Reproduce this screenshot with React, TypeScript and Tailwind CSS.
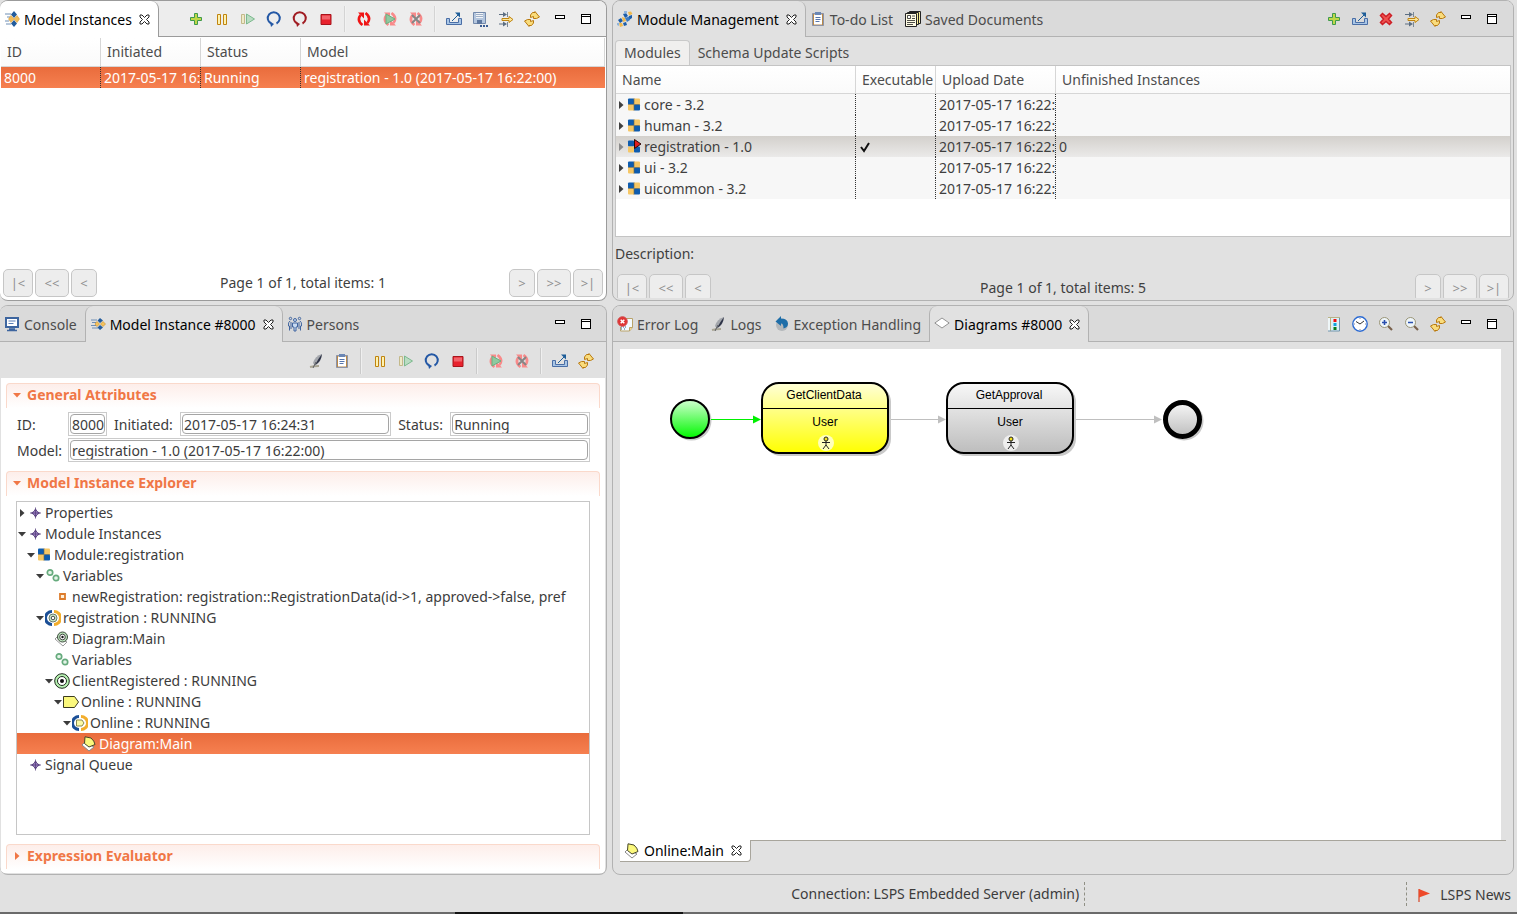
import React from 'react';
import clsx from 'clsx';

/* ---------- icons ---------- */

type IconName =
  | 'instance' | 'instanceTab' | 'add' | 'pause' | 'resume' | 'restart' | 'restartRed' | 'stop' | 'refreshRed'
  | 'resumeAll' | 'stopAll' | 'export' | 'save' | 'filter' | 'sync' | 'minimize' | 'maximize'
  | 'modules' | 'todo' | 'documents' | 'delete' | 'module' | 'moduleRun' | 'console' | 'persons'
  | 'feather' | 'errorLog' | 'exception' | 'diamond' | 'legend' | 'clock' | 'zoomIn' | 'zoomOut'
  | 'star' | 'vars' | 'field' | 'process' | 'processDiagram' | 'target' | 'task' | 'taskProcess'
  | 'taskDiagram' | 'flag';

const gold = '#c08410';
const circlingArrows = (color: string) => (
  <g>
    <path d="M6.500 14Q.5 9.500 4.500 4M9.500 2Q15.500 6.500 11.500 12" fill="none" stroke={color} strokeWidth="2.600" />
    <path d="M2 1.500h6v6zM14 14.500H8v-6z" fill={color} />
  </g>
);

const drawings: Record<IconName, React.ReactNode> = {
  instance: (
    <g>
      <path d="M1 3h6M3 6h3M1 10h4M2 13h5" stroke="#6f8fb5" />
      <path d="M10 0l3 3.500-3 3.500-3-3.500zM10 9l3 3.500-3 3.500-3-3.500z" fill="#235c9c" />
      <path d="M7 4.500l3 3.500-3 3.500L4.500 8zM13 4.500L15.500 8 13 11.500 10 8z" fill="#f2bd58" stroke="#cf9430" strokeWidth=".5" />
    </g>
  ),
  instanceTab: (
    <g>
      <path d="M1 4h6M2 6.500h4M1 9.500h5M2 12h6" stroke="#6f8fb5" />
      <path d="M10 2l3 2.500-3 2.500-2.500-2.500zM10 9l3 2.500-3 2.500-2.500-2.500z" fill="#235c9c" />
      <path d="M7 5.500L9.500 8 7 10.500 5 8zM13 5.500L15.500 8 13 10.500 10.500 8z" fill="#f4c35f" stroke="#c78a20" strokeWidth=".6" />
    </g>
  ),
  add: <path d="M6.500 2.500h3v4h4v3h-4v4h-3v-4h-4v-3h4z" fill="#bfd748" stroke="#3f9a4c" />,
  pause: <path d="M3.500 3.500h3v10h-3zM9.500 3.500h3v10h-3z" fill="#fdf2b0" stroke={gold} />,
  resume: (
    <g>
      <path d="M1.500 3.500h3v9h-3z" fill="#eeeac8" stroke="#c3b98a" />
      <path d="M6.500 3v10l8-5z" fill="#b9dcc2" stroke="#7cb98d" />
    </g>
  ),
  restart: (
    <g fill="none" stroke="#2458a5" strokeWidth="2">
      <path d="M5 12.500A6 6 0 1 1 10.500 12.500" />
      <path d="M4 10.500l4 2.500-3 3z" fill="#2458a5" stroke="none" />
    </g>
  ),
  restartRed: (
    <g fill="none" stroke="#a01c22" strokeWidth="2">
      <path d="M5 12.500A6 6 0 1 1 10.500 12.500" />
      <path d="M4 10.500l4 2.500-3 3z" fill="#a01c22" stroke="none" />
    </g>
  ),
  stop: (
    <g>
      <path d="M3 3.500h10v10H3z" fill="#e8222d" stroke="#a8141c" />
      <path d="M4 4.500h8v4H4z" fill="#f2626a" />
    </g>
  ),
  refreshRed: circlingArrows('#f01414'),
  resumeAll: (
    <g>
      {circlingArrows('#f98a8a')}
      <path d="M4 3v10l9-5z" fill="#8fc9a0" stroke="#6aaf80" />
    </g>
  ),
  stopAll: (
    <g>
      {circlingArrows('#f98a8a')}
      <path d="M4 4l8 8M12 4l-8 8" stroke="#858585" strokeWidth="2" />
    </g>
  ),
  export: (
    <g>
      <path d="M.5 7.500h3v4h9v-4h3v6H.5z" fill="#a9c6e6" stroke="#4a6ea6" />
      <path d="M6 10l7-7" stroke="#1d5d98" />
      <path d="M14 1.500v5l-5-5z" fill="#1d5d98" />
    </g>
  ),
  save: (
    <g>
      <path d="M1.500 1.500h12v11h-12z" fill="#b4c6de" stroke="#7389ab" />
      <path d="M4 2h7v5H4z" fill="#f2f4f7" />
      <path d="M4 3.500h7M4 5.500h7" stroke="#9fb0c8" />
      <path d="M5 9h5v4H5z" fill="#5d779f" />
      <path d="M8 15h2M11 15h2M14 15h2" stroke="#3a5c94" strokeWidth="2" />
    </g>
  ),
  filter: (
    <g>
      <path d="M1 3.500h6M1 13h6" stroke="#5c6e82" />
      <path d="M5 1l4 2.500L5 6zM5 10.500L9 13l-4 2.500z" fill="#5c6e82" />
      <path d="M9.500 1v5M9.500 11v5" stroke="#7a8896" />
      <path d="M4 7.500h7v-2l4 3-4 3v-2H4z" fill="#fce79a" stroke={gold} />
    </g>
  ),
  sync: (
    <g fill="#f9dc7c" stroke="#b97a10">
      <path d="M6.500 6.500V4l2-2.500H11V.5l2 2.500 2.500 3-3 1.500h-3V5.500z" />
      <path d="M9.500 9.500V12l-2 2.500H5v1L3 13 .5 10l3-1.500h3v2z" />
    </g>
  ),
  minimize: <path d="M3.500 4.500h9v3h-9z" fill="#fff" stroke="#000" shapeRendering="crispEdges" />,
  maximize: <path d="M3.500 3.500h9v9h-9zM3.500 5.500h9" fill="#fff" stroke="#000" shapeRendering="crispEdges" />,
  modules: (
    <g>
      <path d="M6 3l3-1 2 3-3 2zM12 5l3-1v3l-3 2zM1 9l3-2 2 3-3 2zM6 12l3-1 1 3-3 1z" fill="#1c5da8" />
      <path d="M11 1l3-.5L15.500 3 12 4.500zM5 6l3 1 1 3-3 1zM2 12l3 0 1 3-3 1z" fill="#f0b94c" />
      <path d="M8 7l4-1.500L13 9l-3 2z" fill="#3c7cc4" />
      <path d="M7 0l3 0v2L7 3zM0 12l2 0v3l-2-1z" fill="#8fb4dc" />
    </g>
  ),
  todo: (
    <g>
      <path d="M2.500 2.500h11v12h-11z" fill="#b98948" stroke="#8b93a8" />
      <path d="M4 3.500h8v10H4z" fill="#fff" />
      <path d="M5 1h6v3H5z" fill="#6b87b5" />
      <path d="M5.500 6.500h5M5.500 8.500h5M5.500 10.500h4" stroke="#5675ad" />
    </g>
  ),
  documents: (
    <g stroke="#222">
      <path d="M4.500.5h11v12h-11z" fill="#f8ee9a" />
      <path d="M2.500 1.500h11v12h-11z" fill="#f8ee9a" />
      <path d="M.5 2.500h11v13H.5z" fill="#fffce4" />
      <path d="M2.500 4.500h3v3h-3zM7 5h3M7 7.500h3M2 9.500h8M2 11.500h8M2 13.500h6" fill="#fff" strokeWidth=".8" />
    </g>
  ),
  delete: (
    <path d="M2.500 4.500l2-2L8 5.500l3.500-3 2 2L10.500 8l3 3.500-2 2L8 10.500l-3.500 3-2-2L5.500 8z" fill="#ee5350" stroke="#cd1f26" strokeWidth="1.500" />
  ),
  module: (
    <g>
      <rect x="2" y="1.500" width="6" height="6" rx="1" fill="#0f5cae" />
      <rect x="8" y="1.500" width="6" height="6" rx="1" fill="#f6c766" />
      <rect x="2" y="7.500" width="6" height="6" rx="1" fill="#f6c766" />
      <rect x="8" y="7.500" width="6" height="6" rx="1" fill="#0f5cae" />
      <path d="M8 1v13M2 7.500h12" stroke="#6d6544" strokeOpacity=".6" />
    </g>
  ),
  moduleRun: (
    <g>
      <rect x="2" y="1.500" width="6" height="6" rx="1" fill="#0f5cae" />
      <rect x="2" y="7.500" width="6" height="6" rx="1" fill="#f6c766" />
      <rect x="8" y="7.500" width="6" height="6" rx="1" fill="#0f5cae" />
      <path d="M8.500.5v9l6.500-4.500z" fill="#e01c1c" stroke="#2a0808" />
    </g>
  ),
  console: (
    <g>
      <path d="M2 2h12v9H2z" fill="#fff" stroke="#3d659f" strokeWidth="2" />
      <path d="M4.500 5h7M4.500 7.500h5" stroke="#5a7fb6" />
      <path d="M5 13h6M3 14.500h10" stroke="#3d659f" strokeWidth="1.500" />
    </g>
  ),
  persons: (
    <g fill="none" stroke="#41659f">
      <circle cx="8" cy="4" r="1.500" fill="#c9dbf1" />
      <path d="M5.500 7h5v4h-1.500v4h-2v-4H5.500z" fill="#c9dbf1" />
      <circle cx="3.500" cy="2.500" r="1.200" />
      <circle cx="12.500" cy="2.500" r="1.200" />
      <path d="M3 5Q1 6 1.500 10h1v4.500M13 5q2 1 1.500 5h-1v4.500M4 6v7M12 6v7" />
    </g>
  ),
  feather: (
    <g>
      <path d="M2 14q4-1 9-1" stroke="#a9a594" strokeWidth="2" fill="none" />
      <path d="M14 1q-7 2-9 9l2 3Q14 8 14 1z" fill="#a3a6ac" />
      <path d="M14 1q-4 5-7 11q6-3 7-11z" fill="#2e3346" />
      <path d="M5 15l3-6" stroke="#5b5c60" />
    </g>
  ),
  errorLog: (
    <g>
      <path d="M5.500 2.500h10v9l-3 3.500h-9v-4" fill="#f4faff" stroke="#b9a36a" />
      <path d="M12.500 15v-3.500h3" fill="#f4d48b" stroke="#b9a36a" />
      <path d="M4 13h2M7 13h2M4 11h6" stroke="#31618e" strokeDasharray="1 1" />
      <circle cx="5.500" cy="5.500" r="4.800" fill="#e03434" stroke="#d05050" />
      <path d="M3.700 3.700l3.600 3.600M7.300 3.700L3.700 7.300" stroke="#fff" strokeWidth="1.500" />
    </g>
  ),
  exception: (
    <g>
      <circle cx="8" cy="9" r="6" fill="#b4b8bb" />
      <path d="M7 0L1.500 5.500 7 10V7.500q2.500 0 2.500 5 4.500-1 4.500-5Q13.500 2.500 7 2.500z" fill="#1f6ea8" />
    </g>
  ),
  diamond: <path d="M.8 7L8 2l7.200 5L8 12z" fill="#fff" stroke="#939393" />,
  legend: (
    <g>
      <path d="M2 1h2v14H2z" fill="#eef6f8" />
      <path d="M2 1.500h12M4.500 1v14" stroke="#b9b386" />
      <path d="M5 2h8.500v13H5z" fill="#dbf0f6" />
      <path d="M2 15h11.500V2" stroke="#6f93ac" fill="none" />
      <path d="M7.500 3h3v3h-3z" fill="#f20c0c" />
      <path d="M7.500 7h3v3h-3z" fill="#0fa2dc" />
      <path d="M7.500 11h3v3h-3z" fill="#087d1b" />
    </g>
  ),
  clock: (
    <g>
      <circle cx="8" cy="8" r="7.200" fill="#fff" stroke="#2d6bd2" strokeWidth="1.400" />
      <path d="M4 5.500L8 8l4-3" fill="none" stroke="#333" />
      <path d="M8 2v1M2 8h1M13 8h1M8 13v1" stroke="#889" />
    </g>
  ),
  zoomIn: (
    <g>
      <path d="M10 10l4 4" stroke="#79604c" strokeWidth="2.200" />
      <circle cx="6.500" cy="6.500" r="5" fill="#eef5fa" stroke="#9a9576" />
      <path d="M4 6.500h5M6.500 4v5" stroke="#2a4fae" strokeWidth="1.600" />
    </g>
  ),
  zoomOut: (
    <g>
      <path d="M10 10l4 4" stroke="#79604c" strokeWidth="2.200" />
      <circle cx="6.500" cy="6.500" r="5" fill="#eef5fa" stroke="#9a9576" />
      <path d="M4 6.500h5" stroke="#2a4fae" strokeWidth="1.600" />
    </g>
  ),
  star: (
    <g>
      <path d="M8.500 4L10 6.500 12.500 8 10 9.500 8.500 12 7 9.500 4.500 8 7 6.500z" fill="#a083c8" stroke="#57407c" />
      <path d="M8.500 2.500v11M3 8h11" stroke="#57407c" strokeWidth=".8" />
    </g>
  ),
  vars: (
    <g fill="#e4f3e8" stroke="#66ab7d" strokeWidth="1.700">
      <circle cx="5" cy="4.500" r="2.700" />
      <circle cx="11" cy="10" r="2.700" />
    </g>
  ),
  field: <path d="M6 5h5v5H6z" fill="#fff0d9" stroke="#dd7c2c" strokeWidth="1.800" />,
  process: (
    <g fill="none">
      <path d="M7 1.500A6.500 6.500 0 0 0 7 14.500" stroke="#1b4f96" strokeWidth="3" />
      <path d="M9 1.500a6.500 6.500 0 0 1 0 13" stroke="#f3ae2c" strokeWidth="3" />
      <circle cx="8" cy="8" r="4" fill="#cfeccd" stroke="#6b7c6b" />
      <circle cx="8" cy="8" r="1.800" fill="#fff" stroke="#444" />
    </g>
  ),
  processDiagram: (
    <g>
      <path d="M1 8l2-2 10 5-4 4z" fill="#fff" stroke="#999" />
      <circle cx="8.500" cy="6" r="5" fill="#b9e2b9" stroke="#3d4c3d" />
      <circle cx="8.500" cy="6" r="2.800" fill="#fff" stroke="#444" />
      <circle cx="8.500" cy="6" r="1.200" fill="#111" />
    </g>
  ),
  target: (
    <g>
      <circle cx="8" cy="8" r="7.300" fill="#b7f2b2" stroke="#1e2b1e" />
      <circle cx="8" cy="8" r="4.500" fill="#fff" stroke="#1e2b1e" />
      <circle cx="8" cy="8" r="2" fill="#111" />
    </g>
  ),
  task: <path d="M.5 2.500h11l4 5.500-4 5.500H.5z" fill="#fbf87c" stroke="#3c3c20" />,
  taskProcess: (
    <g fill="none">
      <path d="M7 1.500A6.500 6.500 0 0 0 7 14.500" stroke="#1b4f96" strokeWidth="3" />
      <path d="M9 1.500a6.500 6.500 0 0 1 0 13" stroke="#f3ae2c" strokeWidth="3" />
      <path d="M4.500 5h5.500l2 3-2 3H4.500z" fill="#fbf9a4" stroke="#8b8b50" />
    </g>
  ),
  taskDiagram: (
    <g>
      <path d="M1 9l3-3 9 5-5 4z" fill="#fff" stroke="#888" />
      <path d="M4 .8l6 1.200q3.500 3 4 6.500L8 11 3.500 7.500z" fill="#fbf87c" stroke="#45452a" />
    </g>
  ),
  flag: (
    <g>
      <path d="M3 2v13" stroke="#d9634a" strokeWidth="1.500" />
      <path d="M3 2l11 4.500-11 4z" fill="#ee4a2a" />
    </g>
  ),
};

const Icon: React.FC<{ name: IconName; className?: string }> = ({ name, className }) => (
  <svg viewBox="0 0 16 16" className={clsx('h-4 w-4 shrink-0', className)} fill="none" aria-hidden="true">
    {drawings[name]}
  </svg>
);

const ToolButton: React.FC<{ icon: IconName; label: string }> = ({ icon, label }) => (
  <button type="button" aria-label={label} className="flex h-7 w-[26px] shrink-0 items-center justify-center">
    <Icon name={icon} />
  </button>
);

const Separator = () => <span className="mx-[5px] h-[26px] w-[2px] shrink-0 border-r border-white/70 bg-black/10" />;

type Tool = [IconName, string] | '|';

const Toolbar: React.FC<{ tools: Tool[] }> = ({ tools }) => (
  <div role="toolbar" className="flex items-center">
    {tools.map((tool, i) =>
      tool === '|' ? <Separator key={i} /> : <ToolButton key={i} icon={tool[0]} label={tool[1]} />
    )}
  </div>
);

/* ---------- view folders ---------- */

const CloseButton: React.FC<{ label: string }> = ({ label }) => (
  <button type="button" aria-label={'Close ' + label} className="ml-[7px] shrink-0">
    <svg viewBox="0 0 11 11" className="h-[11px] w-[11px]">
      <path
        d="M1 1h2l2.500 2.500L8 1h2v2L7.500 5.500 10 8v2H8L5.500 7.500 3 10H1V8l2.500-2.500L1 3z"
        fill="#fff"
        stroke="#222"
      />
    </svg>
  </button>
);

interface Tab {
  title: string;
  icon: IconName;
  active?: boolean;
}

interface ViewFolderProps {
  tabs: Tab[];
  tools: Tool[];
  focused?: boolean;
  first?: boolean;
  children: React.ReactNode;
}

const ViewFolder: React.FC<ViewFolderProps> = ({ tabs, tools, focused, first, children }) => {
  const line = focused ? 'border-[#9b9b9b]' : 'border-[#b2b2b2]';
  return (
    <section
      className={clsx(
        'flex min-h-0 min-w-0 flex-col overflow-hidden rounded-lg border',
        line,
        first && 'border-l-0',
        focused ? 'bg-white' : 'bg-[#e1e1e1]'
      )}
    >
      <header className={clsx('flex h-9 shrink-0', focused ? 'bg-[#ededed]' : 'bg-[#dadada]')}>
        <div role="tablist" className="flex">
          {tabs.map((tab, i) => (
            <div
              key={tab.title}
              className={clsx(
                'flex items-center whitespace-nowrap pl-1 pr-2',
                line,
                tab.active
                  ? clsx('rounded-t-lg border-r text-black', focused ? 'bg-white' : 'bg-[#e1e1e1]', i > 0 && 'border-l')
                  : 'border-b text-[#4c4c4c]'
              )}
            >
              <button type="button" role="tab" aria-selected={!!tab.active} className="flex items-center gap-1">
                <Icon name={tab.icon} />
                <span className="pt-[2px]">{tab.title}</span>
              </button>
              {tab.active && <CloseButton label={tab.title} />}
            </div>
          ))}
        </div>
        <div className={clsx('flex flex-1 items-center justify-end border-b', line, first ? 'pr-[7px]' : 'pr-2')}>
          <Toolbar tools={tools} />
          <div className="ml-[2px] flex">
            <ToolButton icon="minimize" label="Minimize" />
            <ToolButton icon="maximize" label="Maximize" />
          </div>
        </div>
      </header>
      {children}
    </section>
  );
};

const PageButton: React.FC<{ text: string; label: string; wide: string }> = ({ text, label, wide }) => (
  <button
    type="button"
    disabled
    aria-label={label}
    className={clsx('h-7 rounded-[5px] border border-[#c6c6c6] bg-[#ededed] text-[13px] text-[#8f8f8f]', wide)}
  >
    {text}
  </button>
);

const Pager: React.FC<{ total: number }> = ({ total }) => (
  <div className="flex shrink-0 items-center justify-between px-[2px]">
    <div className="flex gap-[2px]">
      <PageButton text="|<" label="First page" wide="w-[30px]" />
      <PageButton text="<<" label="Back ten pages" wide="w-[34px]" />
      <PageButton text="<" label="Previous page" wide="w-[26px]" />
    </div>
    <span className="text-[#3f3f3f]">Page 1 of 1, total items: {total}</span>
    <div className="flex gap-[2px]">
      <PageButton text=">" label="Next page" wide="w-[26px]" />
      <PageButton text=">>" label="Forward ten pages" wide="w-[34px]" />
      <PageButton text=">|" label="Last page" wide="w-[30px]" />
    </div>
  </div>
);

const HeadCell: React.FC<{ children: React.ReactNode; width?: string; last?: boolean }> = ({ children, width, last }) => (
  <th
    className={clsx(
      'overflow-hidden whitespace-nowrap border-b border-[#d6d6d6] bg-linear-to-b from-white to-[#fafafa] pl-[6px] text-left font-normal text-[#4c4c4c]',
      width,
      !last && 'border-r'
    )}
  >
    {children}
  </th>
);

/* ---------- model instances ---------- */

const ModelInstances = () => (
  <ViewFolder
    first
    focused
    tabs={[{ title: 'Model Instances', icon: 'instance', active: true }]}
    tools={[
      ['add', 'Create'], ['pause', 'Suspend'], ['resume', 'Resume'], ['restart', 'Restart'], ['restartRed', 'Force restart'], ['stop', 'Terminate'],
      '|', ['refreshRed', 'Update models'], ['resumeAll', 'Continue update'], ['stopAll', 'Abort update'],
      '|', ['export', 'Export'], ['save', 'Save as'], ['filter', 'Filter'], ['sync', 'Refresh'],
    ]}
  >
    <div className="min-h-0 flex-1 px-px pt-px">
      <table className="w-full table-fixed border-separate border-spacing-0">
        <thead>
          <tr className="h-[29px]">
            <HeadCell width="w-[100px]">ID</HeadCell>
            <HeadCell width="w-[100px]">Initiated</HeadCell>
            <HeadCell width="w-[100px]">Status</HeadCell>
            <HeadCell>Model</HeadCell>
          </tr>
        </thead>
        <tbody>
          <tr className="h-[21px] bg-linear-to-b from-[#e96c3c] to-[#f68050] leading-[21px] text-white">
            {['8000', '2017-05-17 16:', 'Running', 'registration - 1.0 (2017-05-17 16:22:00)'].map((cell, i) => (
              <td
                key={cell}
                className={clsx('overflow-hidden whitespace-nowrap pl-[3px]', i < 3 && 'border-r border-dotted border-[#333]')}
              >
                {cell}
              </td>
            ))}
          </tr>
        </tbody>
      </table>
    </div>
    <div className="px-px pb-[3px]">
      <Pager total={1} />
    </div>
  </ViewFolder>
);

/* ---------- module management ---------- */

const modules = [
  { name: 'core - 3.2' },
  { name: 'human - 3.2' },
  { name: 'registration - 1.0', executable: true, unfinished: 0 },
  { name: 'ui - 3.2' },
  { name: 'uicommon - 3.2' },
];

const Arrow: React.FC<{ open?: boolean; className?: string }> = ({ open, className }) => (
  <svg viewBox="0 0 10 10" className={clsx('h-[10px] w-[10px] shrink-0', className)} fill="currentColor" aria-hidden="true">
    <path d={open ? 'M1 3h8L5 7.500z' : 'M3 1l4.500 4L3 9z'} />
  </svg>
);

const ModuleManagement = () => (
  <ViewFolder
    tabs={[
      { title: 'Module Management', icon: 'modules', active: true },
      { title: 'To-do List', icon: 'todo' },
      { title: 'Saved Documents', icon: 'documents' },
    ]}
    tools={[['add', 'Upload'], ['export', 'Export'], ['delete', 'Unload'], ['filter', 'Filter'], ['sync', 'Refresh']]}
  >
    <div className="flex min-h-0 flex-1 flex-col px-[2px] text-[#3f3f3f]">
      <div role="tablist" className="flex h-7 shrink-0 items-end text-[#4c4c4c]">
        <button type="button" role="tab" aria-selected="true" className="h-[25px] rounded-t border border-b-0 border-[#c9c9c9] bg-[#f0efee] px-2">
          Modules
        </button>
        <button type="button" role="tab" aria-selected="false" className="h-[25px] px-2 pt-px">
          Schema Update Scripts
        </button>
      </div>
      <div className="min-h-0 flex-1 border border-[#c4c4c4] bg-white">
        <table className="w-full table-fixed border-separate border-spacing-0">
          <thead>
            <tr className="h-7">
              <HeadCell width="w-[240px]">Name</HeadCell>
              <HeadCell width="w-[80px]">Executable</HeadCell>
              <HeadCell width="w-[120px]">Upload Date</HeadCell>
              <HeadCell last>Unfinished Instances</HeadCell>
            </tr>
          </thead>
          <tbody>
            {modules.map(m => (
              <tr
                key={m.name}
                className={clsx('h-[21px] leading-[21px]', m.executable ? 'bg-linear-to-b from-[#d3d0cc] to-[#ebeae9]' : 'bg-[#f7f7f7]')}
              >
                <td className="border-r border-dotted border-[#333]">
                  <div className="flex items-center">
                    <Arrow className={m.executable && 'text-[#8a8a8a]' || ''} />
                    <Icon name={m.executable ? 'moduleRun' : 'module'} />
                    <span className="ml-[2px] whitespace-nowrap">{m.name}</span>
                  </div>
                </td>
                <td className="border-r border-dotted border-[#333] pl-[3px]">
                  {m.executable && (
                    <svg viewBox="0 0 12 12" className="h-3 w-3" role="img" aria-label="Executable">
                      <path d="M2 6l3 4 5-8" fill="none" stroke="#111" strokeWidth="2" />
                    </svg>
                  )}
                </td>
                <td className="overflow-hidden whitespace-nowrap border-r border-dotted border-[#333] pl-[3px]">2017-05-17 16:22:</td>
                <td className="pl-[3px]">{m.unfinished}</td>
              </tr>
            ))}
          </tbody>
        </table>
      </div>
      <p className="h-[37px] shrink-0 pt-[7px]">Description:</p>
      <div className="h-6 shrink-0 overflow-hidden">
        <Pager total={5} />
      </div>
      <div className="h-[2px] shrink-0" />
    </div>
  </ViewFolder>
);

/* ---------- model instance detail ---------- */

const SectionTitle: React.FC<{ title: string; open?: boolean }> = ({ title, open }) => (
  <h2 className="rounded-t border border-b-0 border-[#fad9cb] bg-linear-to-b from-[#fdeeea] to-white">
    <button type="button" aria-expanded={!!open} className="flex h-6 w-full items-center pb-[2px] pl-[5px] font-bold text-[#f07746]">
      <Arrow open={open} className="mr-[5px]" />
      {title}
    </button>
  </h2>
);

const Field: React.FC<{ id: string; label: string; value: string; labelClass?: string; className: string }> = ({
  id,
  label,
  value,
  labelClass,
  className,
}) => (
  <>
    <label htmlFor={id} className={clsx('shrink-0 pt-px', labelClass)}>
      {label}
    </label>
    <span className={clsx('flex h-6 border border-[#cbcbcb] p-px', className)}>
      <input id={id} readOnly value={value} className="w-full min-w-0 rounded border border-[#a5a5a5] bg-white pl-px pt-px" />
    </span>
  </>
);

interface TreeNode {
  level: number;
  icon: IconName;
  text: string;
  open?: boolean;
  closed?: boolean;
  selected?: boolean;
}

const tree: TreeNode[] = [
  { level: 0, icon: 'star', text: 'Properties', closed: true },
  { level: 0, icon: 'star', text: 'Module Instances', open: true },
  { level: 1, icon: 'module', text: 'Module:registration', open: true },
  { level: 2, icon: 'vars', text: 'Variables', open: true },
  { level: 3, icon: 'field', text: 'newRegistration: registration::RegistrationData(id->1, approved->false, pref' },
  { level: 2, icon: 'process', text: 'registration : RUNNING', open: true },
  { level: 3, icon: 'processDiagram', text: 'Diagram:Main' },
  { level: 3, icon: 'vars', text: 'Variables' },
  { level: 3, icon: 'target', text: 'ClientRegistered : RUNNING', open: true },
  { level: 4, icon: 'task', text: 'Online : RUNNING', open: true },
  { level: 5, icon: 'taskProcess', text: 'Online : RUNNING', open: true },
  { level: 6, icon: 'taskDiagram', text: 'Diagram:Main', selected: true },
  { level: 0, icon: 'star', text: 'Signal Queue' },
];

const ModelInstanceDetail = () => (
  <ViewFolder
    first
    tabs={[
      { title: 'Console', icon: 'console' },
      { title: 'Model Instance #8000', icon: 'instanceTab', active: true },
      { title: 'Persons', icon: 'persons' },
    ]}
    tools={[]}
  >
    <div className="flex h-9 shrink-0 items-center justify-end pr-[7px] pt-[2px]">
      <Toolbar
        tools={[
          ['feather', 'Logs'], ['todo', 'To-dos'],
          '|', ['pause', 'Suspend'], ['resume', 'Resume'], ['restart', 'Restart'], ['stop', 'Terminate'],
          '|', ['resumeAll', 'Continue update'], ['stopAll', 'Abort update'],
          '|', ['export', 'Export'], ['sync', 'Refresh'],
        ]}
      />
    </div>
    <div className="mx-px mb-px flex min-h-0 flex-1 flex-col bg-white px-[5px] pb-1 pt-[5px] text-[#3c3c3c]">
      <SectionTitle title="General Attributes" open />
      <div className="mt-1 space-y-[2px] pl-[11px] pr-[10px]">
        <div className="flex items-center">
          <Field id="mi-id" label="ID:" value="8000" labelClass="w-[51px]" className="w-[39px]" />
          <Field id="mi-initiated" label="Initiated:" value="2017-05-17 16:24:31" labelClass="w-[73px] pl-[7px]" className="min-w-0 flex-[212]" />
          <Field id="mi-status" label="Status:" value="Running" labelClass="w-[59px] pl-[7px]" className="min-w-0 flex-[139]" />
        </div>
        <div className="flex items-center">
          <Field id="mi-model" label="Model:" value="registration - 1.0 (2017-05-17 16:22:00)" labelClass="w-[51px]" className="flex-1" />
        </div>
      </div>
      <div className="mt-[9px]">
        <SectionTitle title="Model Instance Explorer" open />
      </div>
      <ul role="tree" className="ml-[10px] mr-[10px] mt-[5px] min-h-0 flex-1 overflow-hidden border border-[#c6c6c6]">
        {tree.map((node, i) => (
          <li
            key={i}
            role="treeitem"
            aria-selected={!!node.selected}
            className={clsx('flex h-[21px] items-center whitespace-nowrap', node.selected && 'bg-linear-to-b from-[#e96c3c] to-[#f68050] text-white')}
            style={{ paddingLeft: node.level * 9 }}
          >
            {node.open || node.closed ? <Arrow open={node.open} /> : <span className="w-[10px] shrink-0" />}
            <Icon name={node.icon} />
            <span className="ml-[2px]">{node.text}</span>
          </li>
        ))}
      </ul>
      <div className="mt-[9px]">
        <SectionTitle title="Expression Evaluator" />
      </div>
    </div>
  </ViewFolder>
);

/* ---------- diagram ---------- */

const TaskNode: React.FC<{ x: number; title: string; fill: string }> = ({ x, title, fill }) => (
  <g transform={`translate(${x} 34)`}>
    <rect x="2" y="2" width="127" height="71" rx="17" fill="#c9c9c9" />
    <rect x="0" y="0" width="126" height="70" rx="17" fill={fill} stroke="#000" strokeWidth="2" />
    <path d="M0 25.500h126" stroke="#000" />
    <text x="62" y="16" textAnchor="middle">{title}</text>
    <text x="63" y="43" textAnchor="middle">User</text>
    <circle cx="64" cy="60" r="8" fill="#fff" fillOpacity=".7" />
    <g stroke="#222" fill="none">
      <circle cx="64" cy="56" r="2" fill="#f5e21a" />
      <path d="M64 58v4M60 59.500h8M61 66l3-4 3 4" />
    </g>
  </g>
);

const Diagram = () => (
  <svg className="h-[120px] w-[600px] font-['Liberation_Sans',sans-serif] text-[12px]" role="img" aria-label="Online:Main diagram">
    <defs>
      <linearGradient id="green" x2="0" y2="1">
        <stop offset="0" stopColor="#d0ffd0" />
        <stop offset="1" stopColor="#00f800" />
      </linearGradient>
      <linearGradient id="yellow" x2="0" y2="1">
        <stop offset="0" stopColor="#ffffd8" />
        <stop offset="1" stopColor="#ffff00" />
      </linearGradient>
      <linearGradient id="grey" x2="0" y2="1">
        <stop offset="0" stopColor="#f8f8f8" />
        <stop offset="1" stopColor="#bdbdbd" />
      </linearGradient>
    </defs>
    <circle cx="71.500" cy="71.500" r="20" fill="#c9c9c9" />
    <circle cx="70" cy="70" r="19" fill="url(#green)" stroke="#000" strokeWidth="2" />
    <path d="M91 70.500h42" stroke="#00f000" />
    <path d="M133 66.500v8l8-4z" fill="#00f000" />
    <path d="M271 70.500h47M456 70.500h78" stroke="#bfbfbf" />
    <path d="M318 66.500v8l8-4zM534 66.500v8l8-4z" fill="#bfbfbf" />
    <TaskNode x={142} title="GetClientData" fill="url(#yellow)" />
    <TaskNode x={327} title="GetApproval" fill="url(#grey)" />
    <circle cx="564" cy="72" r="19.500" fill="#c9c9c9" />
    <circle cx="562.500" cy="70.500" r="17" fill="url(#grey)" stroke="#000" strokeWidth="5" />
  </svg>
);

const Diagrams = () => (
  <ViewFolder
    tabs={[
      { title: 'Error Log', icon: 'errorLog' },
      { title: 'Logs', icon: 'feather' },
      { title: 'Exception Handling', icon: 'exception' },
      { title: 'Diagrams #8000', icon: 'diamond', active: true },
    ]}
    tools={[['legend', 'Legend'], ['clock', 'History'], ['zoomIn', 'Zoom in'], ['zoomOut', 'Zoom out'], ['sync', 'Refresh']]}
  >
    <div className="flex min-h-0 flex-1 flex-col px-[7px] pb-3 pt-[7px]">
      <div className="mr-[5px] min-h-0 flex-1 overflow-hidden bg-white">
        <Diagram />
      </div>
      <div className="flex h-[22px] shrink-0">
        <div className="flex items-center rounded-br border-b border-r border-[#a8a59c] bg-white pl-1 pr-2 text-black">
          <button type="button" className="flex items-center gap-1">
            <Icon name="taskDiagram" />
            Online:Main
          </button>
          <CloseButton label="Online:Main" />
        </div>
        <div className="flex-1 border-t border-[#a8a59c]" />
      </div>
    </div>
  </ViewFolder>
);

/* ---------- workbench ---------- */

const App = () => (
  <div className="flex h-screen flex-col overflow-hidden bg-[#e1e1e1] font-['Noto_Sans',sans-serif] text-[14px] leading-5 text-[#3c3c3c]">
    <main className="grid min-h-0 flex-1 grid-cols-[minmax(0,607fr)_minmax(0,902fr)] grid-rows-[minmax(0,301fr)_minmax(0,570fr)] gap-x-[5px] gap-y-1 pr-[3px]">
      <ModelInstances />
      <ModuleManagement />
      <ModelInstanceDetail />
      <Diagrams />
    </main>
    <footer className="flex h-[37px] shrink-0 items-center justify-end pr-[6px] pt-px">
      <span className="pr-[5px]">Connection: LSPS Embedded Server (admin)</span>
      <span className="mr-[321px] h-6 border-l border-dashed border-[#8f8f84]" />
      <span className="h-6 border-l border-dashed border-[#8f8f84]" />
      <button type="button" className="ml-[9px] flex items-center gap-2 pt-px">
        <Icon name="flag" />
        LSPS News
      </button>
    </footer>
    <div className="flex h-[2px] shrink-0 bg-[#6a6a6a]">
      <span className="ml-[30%] w-[15%] bg-[#141414]" />
    </div>
  </div>
);

export default App;
